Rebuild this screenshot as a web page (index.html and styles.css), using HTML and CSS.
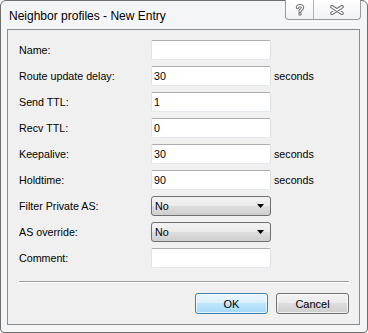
FILE: index.html
```html
<!DOCTYPE html>
<html lang="en">

<head>
    <meta charset="UTF-8">
    <meta name="viewport" content="width=device-width, initial-scale=1.0">
    <title>Neighbor profiles - New Entry</title>
    <link rel="stylesheet" href="styles.css">
</head>

<body>
    <div class="window">
        <div class="titlebar">
            <span class="title">Neighbor profiles - New Entry</span>
            <div class="caption-buttons">
                <div class="cap help">
                    <svg width="10" height="12" viewBox="0 0 10 12">
                        <g fill="none" stroke-linecap="round" stroke-linejoin="round">
                            <path d="M2.5 3.6 C2.5 1.2 7.5 1.2 7.5 3.6 C7.5 5.4 5 5.6 5 7.4" stroke="#6e6e6e" stroke-width="3.4" />
                            <path d="M5 10 L5 10.1" stroke="#6e6e6e" stroke-width="3.4" />
                            <path d="M2.5 3.6 C2.5 1.2 7.5 1.2 7.5 3.6 C7.5 5.4 5 5.6 5 7.4" stroke="#fff" stroke-width="1.4" />
                            <path d="M5 10 L5 10.1" stroke="#fff" stroke-width="1.4" />
                        </g>
                    </svg>
                </div>
                <div class="cap close">
                    <svg width="14" height="10" viewBox="0 0 14 10">
                        <g fill="none" stroke-linecap="round">
                            <path d="M2 1.8 L12 8.2 M12 1.8 L2 8.2" stroke="#6e6e6e" stroke-width="3.6" />
                            <path d="M2 1.8 L12 8.2 M12 1.8 L2 8.2" stroke="#fff" stroke-width="1.6" />
                        </g>
                    </svg>
                </div>
            </div>
        </div>

        <div class="client">
            <div class="form">
                <label>Name:</label>
                <div class="text"></div>
                <span></span>

                <label>Route update delay:</label>
                <div class="text">30</div>
                <span class="unit">seconds</span>

                <label>Send TTL:</label>
                <div class="text">1</div>
                <span></span>

                <label>Recv TTL:</label>
                <div class="text">0</div>
                <span></span>

                <label>Keepalive:</label>
                <div class="text">30</div>
                <span class="unit">seconds</span>

                <label>Holdtime:</label>
                <div class="text">90</div>
                <span class="unit">seconds</span>

                <label>Filter Private AS:</label>
                <div class="combo">
                    <span>No</span>
                    <svg width="7" height="4" viewBox="0 0 7 4"><path d="M0 0 H7 L3.5 4 Z" fill="#000" /></svg>
                </div>
                <span></span>

                <label>AS override:</label>
                <div class="combo">
                    <span>No</span>
                    <svg width="7" height="4" viewBox="0 0 7 4"><path d="M0 0 H7 L3.5 4 Z" fill="#000" /></svg>
                </div>
                <span></span>

                <label>Comment:</label>
                <div class="text"></div>
                <span></span>
            </div>

            <div class="separator"></div>

            <div class="actions">
                <div class="button default">OK</div>
                <div class="button">Cancel</div>
            </div>
        </div>
    </div>
</body>

</html>
```

FILE: styles.css
```css
body,
html {
    margin: 0;
    padding: 0;
    background: #ffffff;
    font-family: "Liberation Sans", Arial, sans-serif;
}

.window {
    width: 368px;
    height: 333px;
    box-sizing: border-box;
    border: 1px solid #6e6e6e;
    border-radius: 6px 6px 4px 4px;
    background-color: #f4f5f7;
    padding: 0 7px 7px 6px;
    display: flex;
    flex-direction: column;
}

.titlebar {
    height: 28px;
    display: flex;
    align-items: flex-start;
}

.title {
    font-size: 12px;
    color: #000;
    margin: 8px 0 0 2px;
}

.caption-buttons {
    margin: -1px -1px 0 auto;
    display: flex;
    height: 19px;
    border: 1px solid #9a9a9a;
    border-top: none;
    border-radius: 0 0 4px 4px;
    overflow: hidden;
    background: linear-gradient(#ffffff, #f1f2f4);
}

.cap {
    display: flex;
    align-items: center;
    justify-content: center;
}

.cap.help {
    width: 27px;
    border-right: 1px solid #b4b4b4;
}

.cap.close {
    width: 46px;
}

.client {
    flex: 1;
    border: 1px solid #8c8c8c;
    background-color: #f0f0f0;
    padding: 10px 10px 0 11px;
    font-size: 10.7px;
    color: #000;
}

.form {
    display: grid;
    grid-template-columns: 132px 120px auto;
    grid-auto-rows: 20px;
    row-gap: 6px;
    align-items: center;
}

.text {
    height: 20px;
    box-sizing: border-box;
    background: #ffffff;
    border: 1px solid;
    border-color: #abadb3 #dbdfe6 #e3e9ef #e2e3ea;
    border-radius: 2px;
    padding: 0 2px;
    line-height: 18px;
}

.unit {
    padding-left: 3px;
}

.combo {
    height: 20px;
    box-sizing: border-box;
    border: 1px solid #707070;
    border-radius: 3px;
    background: linear-gradient(#f2f2f2 0%, #ebebeb 50%, #dddddd 50%, #cfcfcf 100%);
    display: flex;
    align-items: center;
    justify-content: space-between;
    padding: 0 6px 0 3px;
}

.separator {
    margin-top: 13px;
    height: 1px;
    background: #a0a0a0;
    border-bottom: 1px solid #ffffff;
}

.actions {
    margin-top: 10px;
    display: flex;
    justify-content: flex-end;
    gap: 8px;
}

.button {
    width: 73px;
    height: 21px;
    box-sizing: border-box;
    border: 1px solid #707070;
    border-radius: 3px;
    background: linear-gradient(#f2f2f2 0%, #ebebeb 50%, #dddddd 50%, #cfcfcf 100%);
    box-shadow: inset 0 0 0 1px rgba(255, 255, 255, 0.7);
    display: flex;
    align-items: center;
    justify-content: center;
    font-size: 11px;
}

.button.default {
    border-color: #3c7fb1;
    background: linear-gradient(#eaf6fd 0%, #d9f0fc 50%, #bee6fd 50%, #a7d9f5 100%);
}
```
